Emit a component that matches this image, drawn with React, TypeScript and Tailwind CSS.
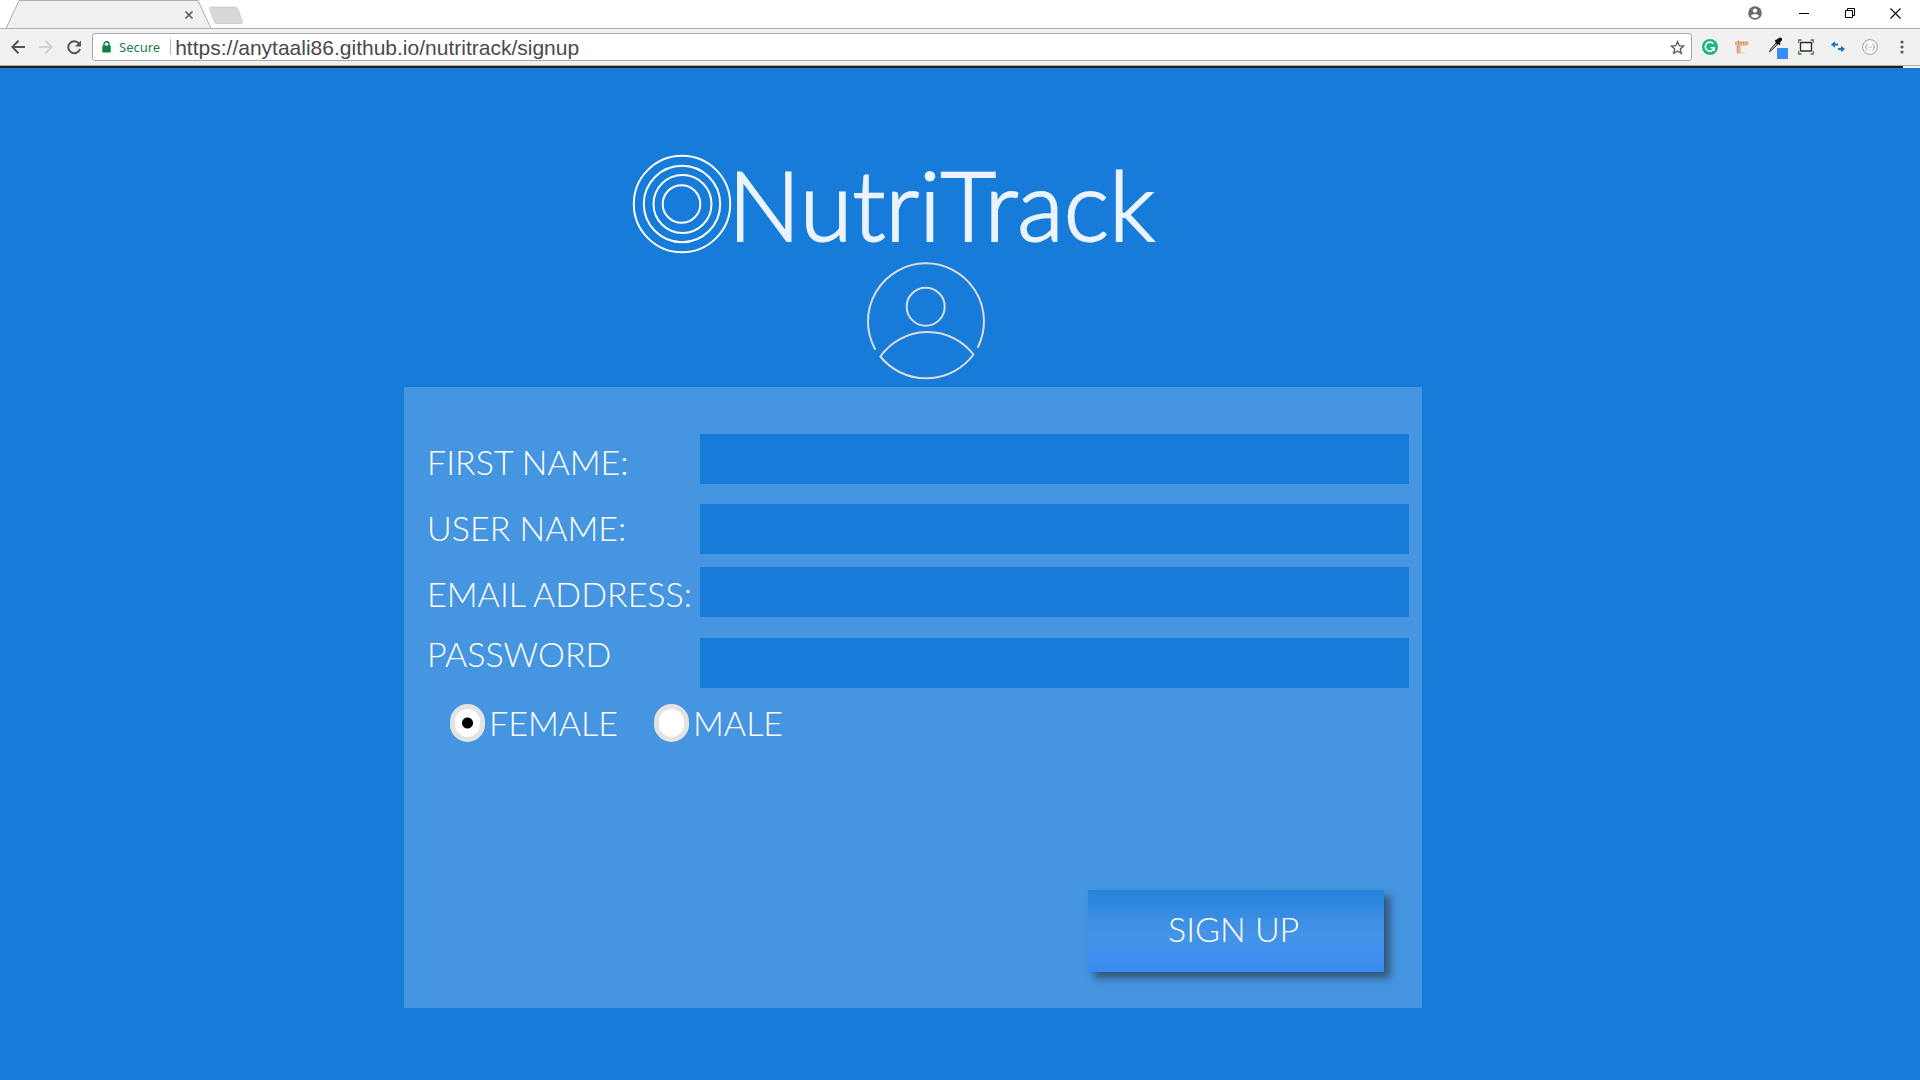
import { useState } from "react";
import type { ReactNode } from "react";

function Tab() {
  return (
    <div className="relative ml-1.5 flex h-full w-[206px] shrink-0 items-center justify-end pr-4">
      <svg className="absolute inset-0 h-7 w-[206px]" viewBox="0 0 206 28" aria-hidden="true">
        <path d="M0 28.5 L13 0.5 H192 L205 28.5" fill="#f1f1f1" stroke="#acacac" />
      </svg>
      <button type="button" aria-label="Close tab" className="relative grid size-3.5 place-items-center pt-0.5">
        <svg width="10" height="10" viewBox="0 0 10 10" aria-hidden="true">
          <path d="M1.5 1.5 L8.5 8.5 M8.5 1.5 L1.5 8.5" stroke="#5a5a5a" strokeWidth="1.6" />
        </svg>
      </button>
    </div>
  );
}

function ToolButton({ label, children }: { label: string; children: ReactNode }) {
  return (
    <button type="button" aria-label={label} className="grid h-7 w-8 shrink-0 place-items-center">
      {children}
    </button>
  );
}

function TabStrip() {
  return (
    <div className="flex h-7 bg-white">
      <Tab />
      <button type="button" aria-label="New tab" className="-ml-1 mt-1.5 self-start">
        <svg width="36" height="18" viewBox="0 0 36 18" aria-hidden="true">
          <path d="M3 1 H26 Q29 1 30 3 L34.500 16 Q34.500 17.500 33 17.500 H9 Q7 17.500 6.500 16 L1.500 3 Q1 1 3 1Z" fill="#d8d8d8" stroke="#c4c4c4" strokeWidth="0.7" />
        </svg>
      </button>
      <div className="ml-auto flex items-start">
        <button type="button" aria-label="Profile" className="mr-3 grid h-[26px] w-7 place-items-center">
          <svg width="14" height="14" viewBox="0 0 14 14" aria-hidden="true">
            <circle cx="7" cy="7" r="6.800" fill="#6b6b6b" />
            <circle cx="7" cy="4.600" r="2.200" fill="#fff" />
            <path d="M2.700 9.800 Q4.200 7.900 7 7.900 T11.300 9.800 Q9.700 12 7 12 T2.700 9.800Z" fill="#fff" />
          </svg>
        </button>
        <button type="button" aria-label="Minimize" className="grid h-[26px] w-[46px] place-items-center">
          <svg width="10" height="10" viewBox="0 0 10 10" aria-hidden="true">
            <path d="M0 5.500 H10" stroke="#000" />
          </svg>
        </button>
        <button type="button" aria-label="Restore" className="grid h-[26px] w-[45px] place-items-center">
          <svg width="10" height="10" viewBox="0 0 10 10" fill="none" aria-hidden="true">
            <path d="M0.500 2.500 H7.500 V9.500 H0.500Z M2.500 2.500 V0.500 H9.500 V7.500 H7.500" stroke="#000" />
          </svg>
        </button>
        <button type="button" aria-label="Close window" className="mr-0.5 grid h-[26px] w-[46px] place-items-center">
          <svg width="11" height="11" viewBox="0 0 11 11" aria-hidden="true">
            <path d="M0.500 0.500 L10.500 10.500 M10.500 0.500 L0.500 10.500" stroke="#000" strokeWidth="1.100" />
          </svg>
        </button>
      </div>
    </div>
  );
}

function Toolbar() {
  return (
    <div className="flex h-[38px] items-center border-y border-[#b0b0b0] bg-[#f1f1f1] pr-0.5">
      <button type="button" aria-label="Back" className="ml-1 grid size-7 place-items-center">
        <svg width="14" height="14" viewBox="0 0 14 14" fill="none" stroke="#555" strokeWidth="2" aria-hidden="true">
          <path d="M14 7 H1.500 M7.500 0.700 L1.300 7 L7.500 13.300" />
        </svg>
      </button>
      <button type="button" aria-label="Forward" className="grid size-7 place-items-center">
        <svg width="14" height="14" viewBox="0 0 14 14" fill="none" stroke="#d2d2d2" strokeWidth="2" aria-hidden="true">
          <path d="M0 7 H12.500 M6.500 0.700 L12.700 7 L6.500 13.300" />
        </svg>
      </button>
      <button type="button" aria-label="Reload" className="grid size-7 place-items-center">
        <svg width="15" height="15" viewBox="0 0 15 15" aria-hidden="true">
          <path d="M12 3.500 A6 6 0 1 0 13 9" fill="none" stroke="#555" strokeWidth="2" />
          <path d="M14 0.500 V6.500 H8Z" fill="#555" />
        </svg>
      </button>
      <div className="ml-1 flex h-7 min-w-0 flex-1 items-center rounded-[3px] border border-[#a8a8a8] bg-white">
        <svg className="ml-[9px] shrink-0" width="9" height="12" viewBox="0 0 9 12" aria-hidden="true">
          <path d="M2 5 V3.300 a2.500 2.500 0 0 1 5 0 V5" fill="none" stroke="#0b8043" strokeWidth="1.400" />
          <rect x="0.300" y="4.600" width="8.400" height="7" rx="0.600" fill="#0b8043" />
        </svg>
        <span className="ml-2 font-['Noto_Sans',sans-serif] text-[13px] leading-5 text-[#188048]">Secure</span>
        <span className="ml-2.5 h-4 w-px shrink-0 bg-[#b5b5b5]" />
        <input
          type="text"
          aria-label="Address"
          defaultValue="https://anytaali86.github.io/nutritrack/signup"
          className="ml-1 h-[26px] min-w-0 flex-1 bg-transparent p-0 pt-0.5 font-['Liberation_Sans',Arial,sans-serif] text-[21px] leading-6 text-[#4a4a4a] outline-none"
        />
        <button type="button" aria-label="Bookmark this page" className="mr-1.5 grid size-4 place-items-center">
          <svg width="15" height="15" viewBox="0 0 15 15" aria-hidden="true">
            <path d="M7.500 1.600 L9.200 5.700 L13.600 6.100 L10.300 9 L11.300 13.300 L7.500 11 L3.700 13.300 L4.700 9 L1.400 6.100 L5.800 5.700Z" fill="none" stroke="#555" strokeWidth="1.300" />
          </svg>
        </button>
      </div>
      <div className="ml-0.5 flex">
        <ToolButton label="Grammar check">
          <svg width="16" height="16" viewBox="0 0 16 16" aria-hidden="true">
            <circle cx="8" cy="8" r="8" fill="#1db978" />
            <path d="M11.200 4.600 A4.500 4.500 0 1 0 12.200 8.700 H8.600 M12.200 8.700 V12" fill="none" stroke="#fff" strokeWidth="1.600" />
          </svg>
        </ToolButton>
        <ToolButton label="Ruler">
          <svg width="16" height="16" viewBox="0 0 16 16" aria-hidden="true">
            <path d="M5 14.500 h6 v-1 h-5z" fill="#d8d8d8" />
            <path d="M1.500 3 H14 V6 H6 V14 H3 V6 H1.500Z" fill="#f0b98a" stroke="#dca273" strokeWidth="0.800" />
            <path d="M4.500 1.500 v4 M7 3 v1.500 M9.500 3 v1.500 M12 3 v1.500 M3 8 h1.500 M3 11 h1.500" stroke="#b97a42" strokeWidth="0.800" />
          </svg>
        </ToolButton>
        <ToolButton label="Color picker">
          <svg width="28" height="24" viewBox="0 0 28 24" aria-hidden="true">
            <path d="M9.500 17 L10.500 14 L17 7 L18.500 8.500 L12.500 14.500Z" fill="#8aa898" stroke="#3a4a40" strokeWidth="1" />
            <path d="M15.500 5 L20 9.500" stroke="#111" strokeWidth="2" />
            <path d="M17.500 7 L20 4.500" stroke="#111" strokeWidth="4" strokeLinecap="round" />
            <rect x="17" y="13" width="11" height="11" fill="#388cf0" />
          </svg>
        </ToolButton>
        <ToolButton label="Capture">
          <svg width="16" height="16" viewBox="0 0 16 16" fill="none" aria-hidden="true">
            <rect x="2.500" y="3.500" width="11" height="8.500" rx="0.500" stroke="#2f2f2f" strokeWidth="1.400" fill="#f7f7f7" />
            <path d="M0.700 4 V1 H3.500 M12.500 1 H15.300 V4 M0.700 12 V15 H3.500 M12.500 15 H15.300 V12" stroke="#3d8b37" strokeWidth="1.300" />
          </svg>
        </ToolButton>
        <ToolButton label="Resize">
          <svg width="14" height="12" viewBox="0 0 14 12" fill="#1178bd" aria-hidden="true">
            <path d="M0 3.500 L4 0.300 V2.500 H7 V4.500 H4 V6.700Z M14 8 L10 4.800 V7 H7 V9 H10 V11.200Z" />
          </svg>
        </ToolButton>
        <ToolButton label="JSON viewer">
          <svg width="16" height="16" viewBox="0 0 16 16" fill="none" stroke="#9d9d9d" aria-hidden="true">
            <circle cx="8" cy="8" r="7.400" fill="#fafafa" />
            <path d="M5.500 5 Q4.300 5 4.300 6.500 Q4.300 8 3.200 8 Q4.300 8 4.300 9.500 Q4.300 11 5.500 11 M10.500 5 Q11.700 5 11.700 6.500 Q11.700 8 12.800 8 Q11.700 8 11.700 9.500 Q11.700 11 10.500 11 M6.300 8.300 h0.700 M7.700 8.300 h0.700 M9.100 8.300 h0.700" />
          </svg>
        </ToolButton>
        <ToolButton label="Menu">
          <svg width="4" height="14" viewBox="0 0 4 14" fill="#5a5a5a" aria-hidden="true">
            <circle cx="2" cy="2" r="1.600" />
            <circle cx="2" cy="7" r="1.600" />
            <circle cx="2" cy="12" r="1.600" />
          </svg>
        </ToolButton>
      </div>
    </div>
  );
}

function Rings() {
  return (
    <svg className="size-[100px] shrink-0" viewBox="0 0 100 100" fill="none" stroke="#fff" strokeWidth="2" aria-hidden="true">
      <circle cx="50" cy="50" r="48.200" />
      <circle cx="50" cy="50" r="38.200" />
      <circle cx="50.500" cy="50" r="29" />
      <circle cx="49.500" cy="50" r="18.800" />
    </svg>
  );
}

function Avatar() {
  return (
    <svg className="size-[120px]" viewBox="0 0 120 120" fill="none" stroke="#dbdcde" strokeWidth="2" strokeLinecap="round" strokeLinejoin="round" aria-hidden="true">
      <path d="M9 88 A58 58 0 1 1 112 86" />
      <circle cx="59.700" cy="45.700" r="19" />
      <path d="M14.300 95.500 A58 58 0 0 1 107.500 93.500 A59 59 0 0 1 14.300 95.500Z" />
    </svg>
  );
}

const fields = [
  { id: "first-name", label: "FIRST NAME:", type: "text", labelGap: "", inputGap: "" },
  { id: "user-name", label: "USER NAME:", type: "text", labelGap: "mt-[26px]", inputGap: "mt-5" },
  { id: "email", label: "EMAIL ADDRESS:", type: "email", labelGap: "mt-[26px]", inputGap: "mt-[13px]" },
  { id: "password", label: "PASSWORD", type: "password", labelGap: "mt-5", inputGap: "mt-[21px]" },
];

function GenderOption({ value, label, checked, onSelect }: { value: string; label: string; checked: boolean; onSelect: () => void }) {
  return (
    <label className="flex items-center gap-1">
      <input
        type="radio"
        name="gender"
        value={value}
        checked={checked}
        onChange={onSelect}
        className="h-[38px] w-[35px] appearance-none rounded-full border-[5px] border-[#e3e3e3] bg-white checked:bg-[radial-gradient(circle,#000_5px,#fff_6px)]"
      />
      {label}
    </label>
  );
}

function SignupForm() {
  const [gender, setGender] = useState("female");
  return (
    <form
      onSubmit={(event) => event.preventDefault()}
      className="flex min-h-[621px] flex-col bg-[#4595e1] pt-[47px] pr-[13px] pb-9 pl-[23px] text-[34px] leading-10 font-light text-white"
    >
      <div className="flex">
        <div className="flex w-[273px] shrink-0 flex-col pt-2">
          {fields.map((field) => (
            <label key={field.id} htmlFor={field.id} className={`whitespace-nowrap ${field.labelGap}`}>
              {field.label}
            </label>
          ))}
        </div>
        <div className="flex min-w-0 flex-1 flex-col">
          {fields.map((field) => (
            <input
              key={field.id}
              id={field.id}
              type={field.type}
              className={`h-[50px] w-full bg-[#167bd9] px-3 text-2xl outline-none ${field.inputGap}`}
            />
          ))}
        </div>
      </div>
      <div className="mt-[15px] flex gap-9 pl-[23px]">
        <GenderOption value="female" label="FEMALE" checked={gender === "female"} onSelect={() => setGender("female")} />
        <GenderOption value="male" label="MALE" checked={gender === "male"} onSelect={() => setGender("male")} />
      </div>
      <button
        type="submit"
        className="mt-auto mr-[25px] h-[82px] w-[296px] self-end bg-linear-to-b from-[#2383db] via-[#4594e8] via-55% to-[#388cf0] pr-1 pb-1 shadow-[6px_6px_8px_rgba(40,50,60,0.65)]"
      >
        SIGN UP
      </button>
    </form>
  );
}

export default function App() {
  return (
    <div className="flex min-h-screen flex-col bg-[#167bd9] font-['Lato',sans-serif]">
      <header className="bg-[#f1f1f1]">
        <TabStrip />
        <Toolbar />
        <div className="mr-[17px] h-0.5 bg-[#1b1f22]" />
      </header>
      <main className="flex-1 pt-[86px] pb-[72px]">
        <section className="ml-[404px] w-[53%]">
          <div className="flex h-[100px] items-center pl-[228px]">
            <Rings />
            <h1 className="-ml-1 text-[96px] leading-[100px] font-light text-[#ebf3fe] [-webkit-text-stroke:2px_#ebf3fe]">NutriTrack</h1>
          </div>
          <div className="flex justify-center pt-[7px] pb-[6px] pl-[26px]">
            <Avatar />
          </div>
          <SignupForm />
        </section>
      </main>
    </div>
  );
}
